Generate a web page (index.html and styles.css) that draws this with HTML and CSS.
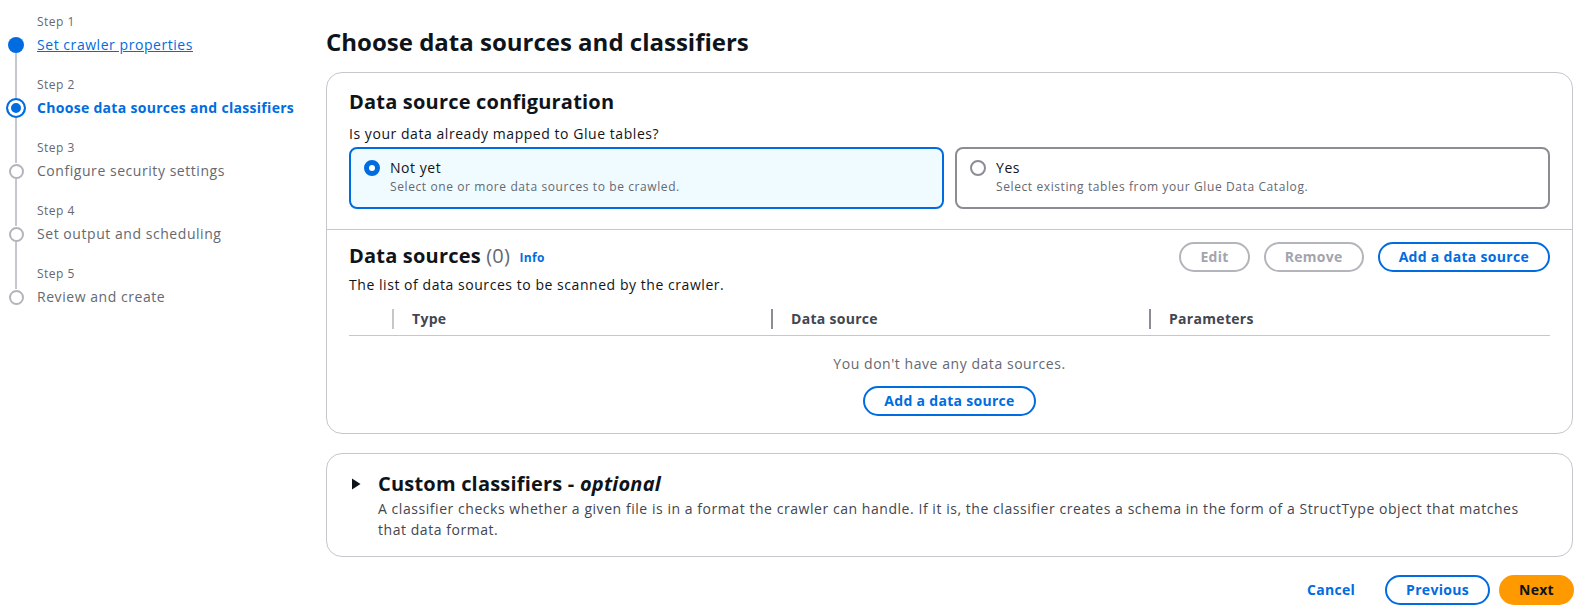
FILE: index.html
```html
<!DOCTYPE html>
<html lang="en">
<head>
<meta charset="utf-8">
<title>Choose data sources and classifiers</title>
<link rel="stylesheet" href="styles.css">
</head>
<body>
<div class="page">
  <nav class="wizard-nav">
    <div class="step done">
      <span class="step-label">Step 1</span>
      <span class="step-icon icon-done"></span>
      <a class="step-name" href="#">Set crawler properties</a>
    </div>
    <div class="step active">
      <span class="step-label">Step 2</span>
      <span class="step-icon icon-active"></span>
      <span class="step-name">Choose data sources and classifiers</span>
    </div>
    <div class="step">
      <span class="step-label">Step 3</span>
      <span class="step-icon icon-todo"></span>
      <span class="step-name">Configure security settings</span>
    </div>
    <div class="step">
      <span class="step-label">Step 4</span>
      <span class="step-icon icon-todo"></span>
      <span class="step-name">Set output and scheduling</span>
    </div>
    <div class="step last">
      <span class="step-label">Step 5</span>
      <span class="step-icon icon-todo"></span>
      <span class="step-name">Review and create</span>
    </div>
  </nav>

  <main class="main">
    <h1 class="page-title">Choose data sources and classifiers</h1>

    <section class="panel">
      <div class="panel-section config">
        <h2 class="panel-heading">Data source configuration</h2>
        <div class="question">Is your data already mapped to Glue tables?</div>
        <div class="tiles">
          <div class="tile selected">
            <span class="radio checked"></span>
            <div class="tile-text">
              <div class="tile-title">Not yet</div>
              <div class="tile-desc">Select one or more data sources to be crawled.</div>
            </div>
          </div>
          <div class="tile">
            <span class="radio"></span>
            <div class="tile-text">
              <div class="tile-title">Yes</div>
              <div class="tile-desc">Select existing tables from your Glue Data Catalog.</div>
            </div>
          </div>
        </div>
      </div>

      <div class="panel-section sources">
        <div class="sources-header">
          <h2 class="panel-heading">Data sources <span class="count">(0)</span> <a class="info" href="#">Info</a></h2>
          <div class="actions">
            <button class="btn disabled">Edit</button>
            <button class="btn disabled">Remove</button>
            <button class="btn">Add a data source</button>
          </div>
        </div>
        <div class="sources-desc">The list of data sources to be scanned by the crawler.</div>
        <div class="table-head">
          <div class="th-empty"></div>
          <div class="th light">Type</div>
          <div class="th">Data source</div>
          <div class="th">Parameters</div>
        </div>
        <div class="empty">
          <div class="empty-text">You don't have any data sources.</div>
          <button class="btn">Add a data source</button>
        </div>
      </div>
    </section>

    <section class="panel expandable">
      <div class="exp-header">
        <span class="caret">
          <svg width="10" height="12" viewBox="0 0 10 12"><path d="M1 0.5 L9.5 6 L1 11.5 Z" fill="#0f141a"/></svg>
        </span>
        <h2 class="panel-heading">Custom classifiers - <i>optional</i></h2>
      </div>
      <p class="exp-desc">A classifier checks whether a given file is in a format the crawler can handle. If it is, the classifier creates a schema in the form of a StructType object that matches that data format.</p>
    </section>

    <div class="footer">
      <button class="btn link">Cancel</button>
      <button class="btn">Previous</button>
      <button class="btn primary">Next</button>
    </div>
  </main>
</div>
</body>
</html>
```

FILE: styles.css
```css
* { box-sizing: border-box; }

body {
  margin: 0;
  font-family: "Open Sans", "Noto Sans", Arial, sans-serif;
  font-size: 14px;
  line-height: 20px;
  letter-spacing: 0.55px;
  color: #0f141a;
  background: #ffffff;
}

.page {
  display: flex;
  align-items: flex-start;
}

/* ---------- wizard navigation ---------- */
.wizard-nav {
  width: 326px;
  flex: none;
  padding: 14px 0 0 8px;
  display: flex;
  flex-direction: column;
  gap: 21px;
}

.step {
  position: relative;
  display: grid;
  grid-template-columns: 16px 1fr;
  column-gap: 13px;
}

.step:not(.last)::after {
  content: "";
  position: absolute;
  left: 7px;
  top: 39px;
  width: 2px;
  height: 47px;
  background: #c6c6cd;
}

.step-label {
  grid-column: 2;
  grid-row: 1;
  font-size: 12px;
  line-height: 16px;
  letter-spacing: 0.5px;
  color: #656871;
  margin-bottom: 4px;
}

.step-icon {
  grid-column: 1;
  grid-row: 2;
  align-self: center;
  justify-self: center;
  border-radius: 50%;
}

.icon-done {
  width: 16px;
  height: 16px;
  background: #006ce0;
}

.icon-active {
  width: 20px;
  height: 20px;
  border: 2px solid #006ce0;
  background: #006ce0;
  box-shadow: inset 0 0 0 3px #ffffff;
  position: relative;
  z-index: 1;
}

.icon-todo {
  width: 15px;
  height: 15px;
  border: 2px solid #b4b4bb;
  background: #ffffff;
}

.step-name {
  grid-column: 2;
  grid-row: 2;
  font-size: 14px;
  line-height: 22px;
  color: #656871;
  white-space: nowrap;
}

.step.done .step-name {
  color: #006ce0;
  text-decoration: underline;
}

.step.active .step-name {
  color: #006ce0;
  font-weight: 700;
  letter-spacing: 0.3px;
}

/* ---------- main ---------- */
.main {
  flex: 1;
  min-width: 0;
  padding: 27px 8px 0 0;
}

.page-title {
  margin: 0 0 15px;
  font-size: 24px;
  line-height: 30px;
  font-weight: 700;
  letter-spacing: 0;
}

.panel {
  border: 1px solid #c6c6cd;
  border-radius: 16px;
  background: #ffffff;
}

.panel-heading {
  margin: 0;
  font-size: 20px;
  line-height: 24px;
  font-weight: 700;
  letter-spacing: 0.2px;
}

.panel-section.config {
  padding: 17px 22px 20px;
  border-bottom: 1px solid #c6c6cd;
}

.question {
  margin-top: 10px;
}

.tiles {
  margin-top: 3px;
  display: grid;
  grid-template-columns: 1fr 1fr;
  gap: 11px;
}

.tile {
  height: 62px;
  border: 2px solid #8c8c94;
  border-radius: 8px;
  padding: 9px 13px 0;
  display: flex;
  gap: 10px;
  align-items: flex-start;
}

.tile.selected {
  border-color: #006ce0;
  background: #f0fbff;
}

.radio {
  flex: none;
  width: 16px;
  height: 16px;
  margin-top: 2px;
  border-radius: 50%;
  border: 2px solid #8c8c94;
  background: #ffffff;
}

.radio.checked {
  border: 5px solid #006ce0;
}

.tile-title {
  line-height: 20px;
}

.tile-desc {
  font-size: 12px;
  line-height: 18px;
  letter-spacing: 0.6px;
  color: #656871;
}

.panel-section.sources {
  padding: 12px 22px 17px;
}

.sources-header {
  display: flex;
  align-items: center;
  justify-content: space-between;
  height: 30px;
}

.count {
  font-weight: 400;
  color: #656871;
}

.info {
  font-size: 12px;
  font-weight: 700;
  letter-spacing: 0.3px;
  color: #006ce0;
  text-decoration: none;
  margin-left: 4px;
  vertical-align: 1px;
}

.actions {
  display: flex;
  gap: 14px;
}

.sources-desc {
  margin-top: 3px;
}

.table-head {
  margin-top: 7px;
  height: 34px;
  display: grid;
  grid-template-columns: 43px 379px 378px 1fr;
  align-items: center;
  border-bottom: 1px solid #c6c6cd;
}

.th {
  border-left: 2px solid #8c8c94;
  padding-left: 18px;
  line-height: 20px;
  font-weight: 700;
  letter-spacing: 0.3px;
  color: #424650;
}

.th.light {
  border-left-color: #c6c6cd;
}

.empty {
  padding-top: 18px;
  display: flex;
  flex-direction: column;
  align-items: center;
  gap: 12px;
}

.empty-text {
  color: #656871;
}

/* ---------- buttons ---------- */
.btn {
  font-family: inherit;
  font-size: 14px;
  font-weight: 700;
  line-height: 22px;
  letter-spacing: 0.3px;
  padding: 2px 19px;
  border: 2px solid #006ce0;
  border-radius: 20px;
  background: #ffffff;
  color: #006ce0;
  cursor: pointer;
}

.btn.disabled {
  border-color: #b4b4bb;
  color: #a4a4ad;
  cursor: default;
}

.btn.link {
  border-color: transparent;
  background: transparent;
}

.btn.primary {
  background: #ff9900;
  border-color: #ff9900;
  color: #0f141a;
  padding: 2px 18px;
}

/* ---------- expandable ---------- */
.expandable {
  margin-top: 19px;
  padding: 18px 22px 16px;
}

.exp-header {
  display: flex;
  align-items: center;
}

.caret {
  width: 29px;
  flex: none;
  padding-left: 2px;
  display: flex;
  align-items: center;
}

.exp-desc {
  margin: 2px 0 0 29px;
  line-height: 21px;
  color: #424650;
}

/* ---------- footer ---------- */
.footer {
  margin-top: 18px;
  margin-right: -1px;
  display: flex;
  justify-content: flex-end;
  gap: 9px;
}
```
